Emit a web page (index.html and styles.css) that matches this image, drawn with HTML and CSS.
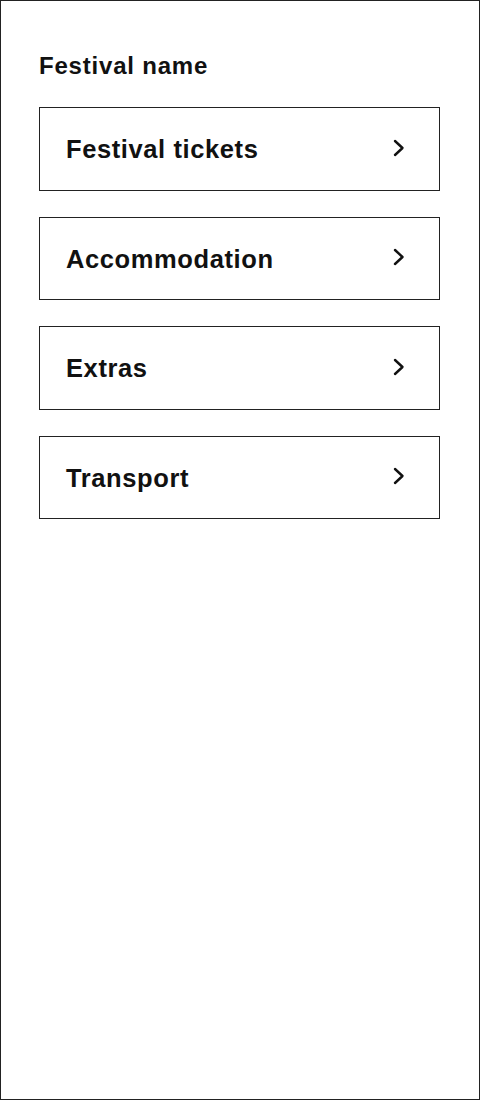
FILE: index.html
```html
<!DOCTYPE html>
<html lang="en">
<head>
  <meta charset="UTF-8">
  <meta name="viewport" content="width=device-width, initial-scale=1.0">
  <title>Festival name</title>
  <link rel="stylesheet" href="styles.css">
</head>
<body>

  <div class="screen">
    <h1 class="festival-title">Festival name</h1>

    <!-- Booking sections -->
    <div class="sections">
      <a class="section" href="#">
        <span>Festival tickets</span>
        <svg class="chevron" viewBox="0 0 12 18"><path d="M2 2 L9.5 9 L2 16"/></svg>
      </a>
      <a class="section" href="#">
        <span>Accommodation</span>
        <svg class="chevron" viewBox="0 0 12 18"><path d="M2 2 L9.5 9 L2 16"/></svg>
      </a>
      <a class="section" href="#">
        <span>Extras</span>
        <svg class="chevron" viewBox="0 0 12 18"><path d="M2 2 L9.5 9 L2 16"/></svg>
      </a>
      <a class="section" href="#">
        <span>Transport</span>
        <svg class="chevron" viewBox="0 0 12 18"><path d="M2 2 L9.5 9 L2 16"/></svg>
      </a>
    </div>
  </div>

</body>
</html>
```

FILE: styles.css
```css
body {
  font-family: 'Liberation Sans', Arial, sans-serif;
  background-color: #fff;
  margin: 0;
  padding: 0;
}

.screen {
  box-sizing: border-box;
  width: 480px;
  height: 1100px;
  border: 1px solid #222;
  padding: 51px 39px 0 38px;
  color: #111;
}

.festival-title {
  margin: 0 0 27px;
  font-size: 24px;
  font-weight: 700;
  line-height: 28px;
  letter-spacing: 0.8px;
}

.sections {
  display: flex;
  flex-direction: column;
  gap: 26px;
}

.section {
  box-sizing: border-box;
  height: 83.5px;
  display: flex;
  align-items: center;
  justify-content: space-between;
  padding: 2px 34px 0 26px;
  border: 1.5px solid #222;
  color: #111;
  text-decoration: none;
  font-size: 25.5px;
  font-weight: 700;
  letter-spacing: 0.6px;
}

.chevron {
  width: 12px;
  height: 18px;
  margin-top: -4px;
  fill: none;
  stroke: #111;
  stroke-width: 2.4;
  stroke-linecap: round;
  stroke-linejoin: round;
}
```
